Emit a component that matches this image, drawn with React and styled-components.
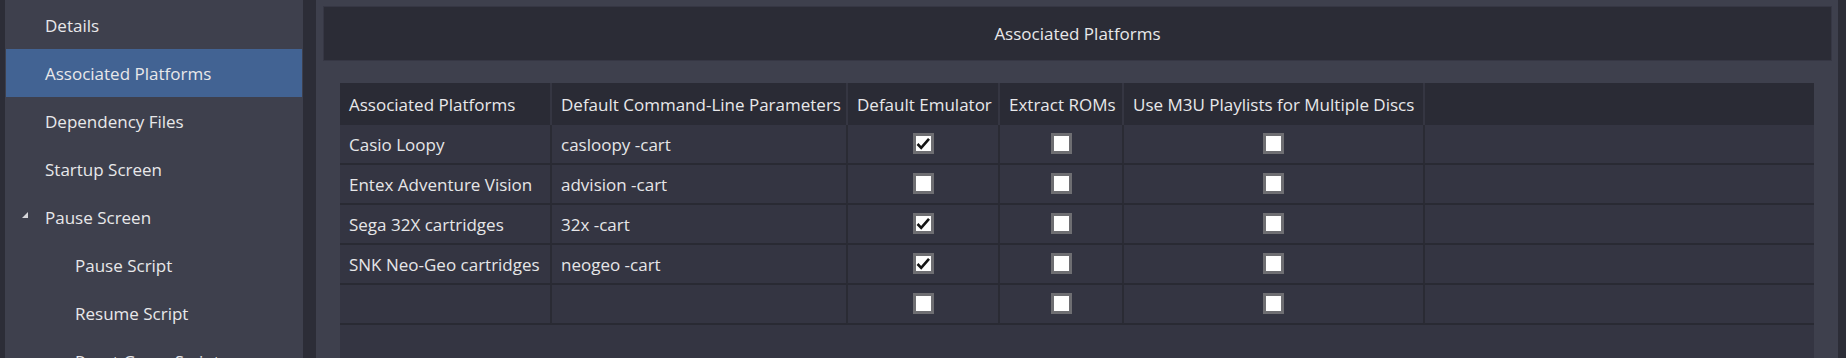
import React from "react";
import styled, { createGlobalStyle } from "styled-components";

const GlobalStyle = createGlobalStyle`
  html, body {
    margin: 0;
    padding: 0;
    background: #2c2d37;
  }
  body {
    font-family: "Open Sans", "Noto Sans", sans-serif;
    font-size: 17px;
    color: #e4e4e6;
  }
`;

//sidebar data
const navItems = [
  { label: "Details", level: 0 },
  { label: "Associated Platforms", level: 0, selected: true },
  { label: "Dependency Files", level: 0 },
  { label: "Startup Screen", level: 0 },
  { label: "Pause Screen", level: 0, expanded: true },
  { label: "Pause Script", level: 1 },
  { label: "Resume Script", level: 1 },
  { label: "Reset Game Script", level: 1 },
];

//table data
const columns = [
  "Associated Platforms",
  "Default Command-Line Parameters",
  "Default Emulator",
  "Extract ROMs",
  "Use M3U Playlists for Multiple Discs",
  "",
];

const rows = [
  { platform: "Casio Loopy", params: "casloopy -cart", def: true },
  { platform: "Entex Adventure Vision", params: "advision -cart", def: false },
  { platform: "Sega 32X cartridges", params: "32x -cart", def: true },
  { platform: "SNK Neo-Geo cartridges", params: "neogeo -cart", def: true },
  { platform: "", params: "", def: false },
];

const CheckBox = ({ checked }) => (
  <Box>
    {checked && (
      <svg width="15" height="15" viewBox="0 0 15 15">
        <path
          d="M1.5 8 L5.2 11.8 L13 2.8"
          fill="none"
          stroke="#151515"
          strokeWidth="2.6"
          strokeLinejoin="miter"
        />
      </svg>
    )}
  </Box>
);

const App = () => {
  return (
    <>
      <GlobalStyle />
      <Window>
        <Sidebar>
          {navItems.map((item) => (
            <NavItem
              key={item.label}
              $selected={item.selected}
              $level={item.level}
              $expander={item.expanded}
            >
              {item.expanded && (
                <Expander width="6" height="6" viewBox="0 0 6 6">
                  <polygon points="6,0 6,6 0,6" fill="#d6d6da" />
                </Expander>
              )}
              {item.label}
            </NavItem>
          ))}
        </Sidebar>
        <Main>
          <TitleBar>Associated Platforms</TitleBar>
          <TableWrap>
            <Grid>
              {columns.map((col, i) => (
                <HeadCell key={i} $last={i === columns.length - 1}>
                  {col}
                </HeadCell>
              ))}
              {rows.map((row, r) => (
                <React.Fragment key={r}>
                  <Cell>{row.platform}</Cell>
                  <Cell>{row.params}</Cell>
                  <Cell $center>
                    <CheckBox checked={row.def} />
                  </Cell>
                  <Cell $center>
                    <CheckBox checked={false} />
                  </Cell>
                  <Cell $center>
                    <CheckBox checked={false} />
                  </Cell>
                  <Cell $last />
                </React.Fragment>
              ))}
            </Grid>
          </TableWrap>
        </Main>
      </Window>
    </>
  );
};

export default App;

const Window = styled.div`
  display: flex;
  height: 358px;
  overflow: hidden;
  background: #2c2d37;
  padding-left: 5px;
  box-sizing: border-box;
`;

const Sidebar = styled.div`
  width: 298px;
  flex-shrink: 0;
  background: #3e404d;
  padding: 1px 1px 0 1px;
  box-sizing: border-box;
  overflow: hidden;
`;

const NavItem = styled.div`
  display: flex;
  align-items: center;
  height: 48px;
  padding-left: ${(p) => (p.$expander ? 16 : p.$level === 1 ? 69 : 39)}px;
  background: ${(p) => (p.$selected ? "#426393" : "transparent")};
  color: #e8e8ea;
  white-space: nowrap;
`;

const Expander = styled.svg`
  margin-right: 17px;
  margin-top: -4px;
  flex-shrink: 0;
`;

const Main = styled.div`
  display: flex;
  flex-direction: column;
  width: 1522px;
  margin-left: 13px;
  flex-shrink: 0;
  background: #3e404d;
  padding: 6px 6px 0 7px;
  box-sizing: border-box;
`;

const TitleBar = styled.div`
  height: 55px;
  display: flex;
  align-items: center;
  justify-content: center;
  background: #2b2c36;
  border: 1px solid #363744;
  box-sizing: border-box;
  color: #e8e8ea;
`;

const TableWrap = styled.div`
  flex: 1;
  margin: 22px 18px 0 17px;
  background: #343542;
`;

const Grid = styled.div`
  display: grid;
  grid-template-columns: 212px 296px 152px 124px 301px 1fr;
  grid-auto-rows: 40px;
  grid-template-rows: 42px;
`;

const HeadCell = styled.div`
  display: flex;
  align-items: center;
  padding-left: 9px;
  background: #2a2b35;
  border-right: ${(p) => (p.$last ? "none" : "2px solid #353642")};
  white-space: nowrap;
  color: #e8e8ea;
`;

const Cell = styled.div`
  display: flex;
  align-items: center;
  justify-content: ${(p) => (p.$center ? "center" : "flex-start")};
  padding-left: ${(p) => (p.$center ? 0 : 9)}px;
  border-right: ${(p) => (p.$last ? "none" : "2px solid #2a2b34")};
  border-bottom: 2px solid #292a33;
  white-space: nowrap;
  color: #e6e6e8;
`;

const Box = styled.div`
  width: 21px;
  height: 21px;
  box-sizing: border-box;
  border: 3px solid #6e6e72;
  background: #ffffff;
  display: flex;
  align-items: center;
  justify-content: center;
  margin-top: -1px;
`;
